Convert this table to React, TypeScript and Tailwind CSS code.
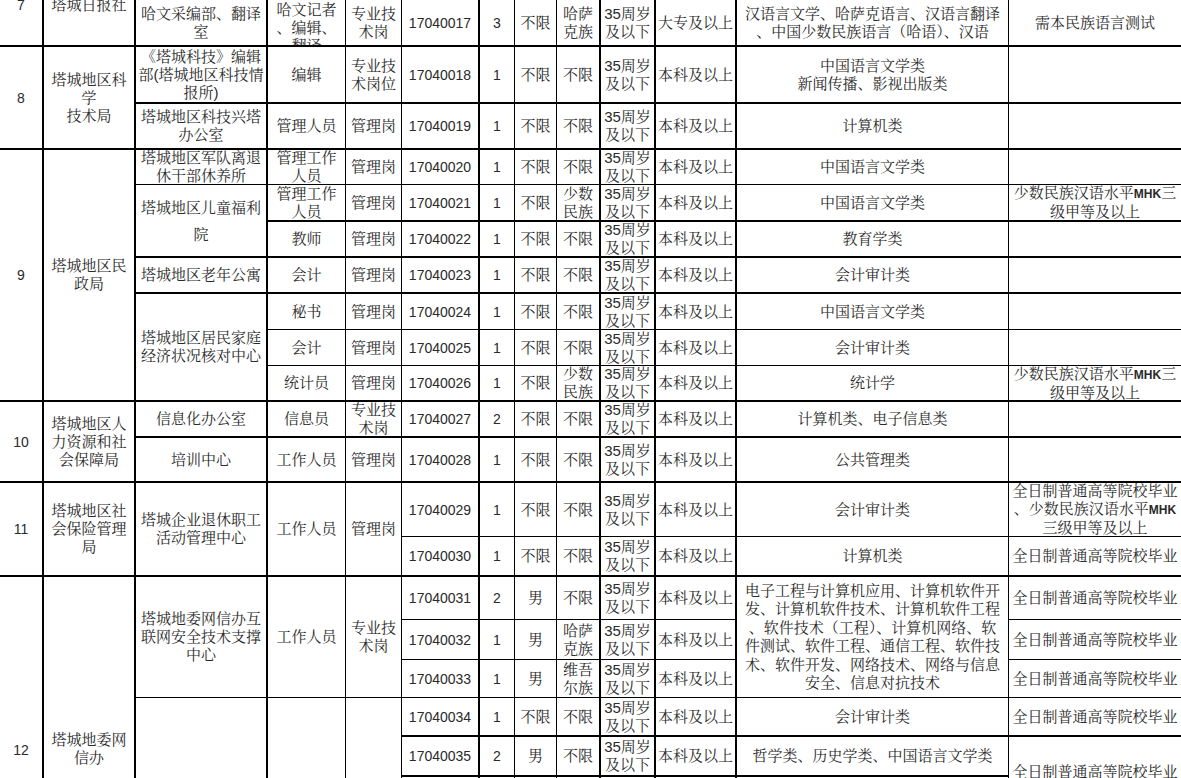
import { Fragment, type ReactNode } from "react";

type Content = string | string[];
type Cell = [Content, number?, string?];

const AGE = ["35周岁", "及以下"];
const BK = "本科及以上";
const QR = "全日制普通高等院校毕业";
const MHK = ["少数民族汉语水平MHK三", "级甲等及以上"];

const tail = (code: string, n: string, g: Content, e: Content, edu: string, major: Content, other: Content): Cell[] => [
  [code],
  [n],
  [g],
  [e],
  [AGE],
  [edu],
  [major],
  [other],
];

const rows: Cell[][] = [
  [["7", 2], ["塔城日报社", 2], [""], [""], [""], [""], [""], [""], [""], [""], [""], [""], [""]],
  [
    [["哈文采编部、翻译", "室"]],
    [["哈文记者", "、编辑、", "翻译"], 1, "items-start pt-px"],
    [["专业技", "术岗"]],
    ...tail("17040017", "3", "不限", ["哈萨", "克族"], "大专及以上", ["汉语言文学、哈萨克语言、汉语言翻译", "、中国少数民族语言（哈语）、汉语"], "需本民族语言测试"),
  ],
  [
    ["8", 2],
    [["塔城地区科", "学", "技术局"], 2],
    [["《塔城科技》编辑", "部(塔城地区科技情", "报所)"]],
    ["编辑"],
    [["专业技", "术岗位"]],
    ...tail("17040018", "1", "不限", "不限", BK, ["中国语言文学类", "新闻传播、影视出版类"], ""),
  ],
  [[["塔城地区科技兴塔", "办公室"]], ["管理人员"], ["管理岗"], ...tail("17040019", "1", "不限", "不限", BK, "计算机类", "")],
  [
    ["9", 7],
    [["塔城地区民", "政局"], 7],
    [["塔城地区军队离退", "休干部休养所"]],
    [["管理工作", "人员"]],
    ["管理岗"],
    ...tail("17040020", "1", "不限", "不限", BK, "中国语言文学类", ""),
  ],
  [
    [["塔城地区儿童福利", "院"], 2, "leading-[27px]"],
    [["管理工作", "人员"]],
    ["管理岗"],
    ...tail("17040021", "1", "不限", ["少数", "民族"], BK, "中国语言文学类", MHK),
  ],
  [["教师"], ["管理岗"], ...tail("17040022", "1", "不限", "不限", BK, "教育学类", "")],
  [["塔城地区老年公寓"], ["会计"], ["管理岗"], ...tail("17040023", "1", "不限", "不限", BK, "会计审计类", "")],
  [
    [["塔城地区居民家庭", "经济状况核对中心"], 3],
    ["秘书"],
    ["管理岗"],
    ...tail("17040024", "1", "不限", "不限", BK, "中国语言文学类", ""),
  ],
  [["会计"], ["管理岗"], ...tail("17040025", "1", "不限", "不限", BK, "会计审计类", "")],
  [["统计员"], ["管理岗"], ...tail("17040026", "1", "不限", ["少数", "民族"], BK, "统计学", MHK)],
  [
    ["10", 2],
    [["塔城地区人", "力资源和社", "会保障局"], 2],
    ["信息化办公室"],
    ["信息员"],
    [["专业技", "术岗"]],
    ...tail("17040027", "2", "不限", "不限", BK, "计算机类、电子信息类", ""),
  ],
  [["培训中心"], ["工作人员"], ["管理岗"], ...tail("17040028", "1", "不限", "不限", BK, "公共管理类", "")],
  [
    ["11", 2],
    [["塔城地区社", "会保险管理", "局"], 2],
    [["塔城企业退休职工", "活动管理中心"], 2],
    ["工作人员", 2],
    ["管理岗", 2],
    ...tail("17040029", "1", "不限", "不限", BK, "会计审计类", [QR, "、少数民族汉语水平MHK", "三级甲等及以上"]),
  ],
  tail("17040030", "1", "不限", "不限", BK, "计算机类", QR),
  [
    ["12", 6, "items-start pt-[164px]"],
    [["塔城地委网", "信办"], 6, "items-start pt-[154px]"],
    [["塔城地委网信办互", "联网安全技术支撑", "中心"], 3],
    ["工作人员", 3],
    [["专业技", "术岗"], 3],
    ["17040031"],
    ["2"],
    ["男"],
    ["不限"],
    [AGE],
    [BK],
    [
      [
        "电子工程与计算机应用、计算机软件开",
        "发、计算机软件技术、计算机软件工程",
        "、软件技术（工程）、计算机网络、软",
        "件测试、软件工程、通信工程、软件技",
        "术、软件开发、网络技术、网络与信息",
        "安全、信息对抗技术",
      ],
      3,
      "leading-[18.5px]",
    ],
    [QR],
  ],
  [["17040032"], ["1"], ["男"], [["哈萨", "克族"]], [AGE], [BK], [QR]],
  [["17040033"], ["1"], ["男"], [["维吾", "尔族"]], [AGE], [BK], [QR]],
  [["", 3], ["", 3], ["", 3], ...tail("17040034", "1", "不限", "不限", BK, "会计审计类", QR)],
  [
    ["17040035"],
    ["2"],
    ["男"],
    ["不限"],
    [AGE],
    [BK],
    ["哲学类、历史学类、中国语言文学类"],
    [QR, 2, "items-start pt-[26px]"],
  ],
  [[""], [""], [""], [""], [""], [""], [""]],
];

// line weights as they come out of the sheet scan
const rightThick = [2, 2, 2, 1, 1, 2, 1, 1, 2, 2, 2, 1, 0];
const bottomThick = [1, 2, 2, 2, 1, 2, 2, 2, 1, 1, 2, 2, 2, 1, 2, 1, 1, 1, 2, 2, 1];

const SPAN: Record<number, string> = {
  1: "",
  2: "row-span-2",
  3: "row-span-3",
  6: "row-span-6",
  7: "row-span-7",
};

function renderLine(line: string): ReactNode {
  if (!line.includes("MHK")) return line;
  const [a, b] = line.split("MHK");
  return (
    <>
      {a}
      <span className="text-[12px] font-bold">MHK</span>
      {b}
    </>
  );
}

function layout() {
  const busy = new Array(13).fill(-1);
  const out: { key: string; content: Content; rs: number; cls: string; c: number; end: number }[] = [];
  rows.forEach((row, r) => {
    let c = 0;
    row.forEach(([content, rs = 1, cls = ""], i) => {
      while (busy[c] >= r) c++;
      busy[c] = r + rs - 1;
      out.push({ key: `${r}-${i}`, content, rs, cls, c, end: r + rs - 1 });
      c++;
    });
  });
  return out;
}

const cells = layout();

export default function App() {
  return (
    <div className="h-[778px] w-[1181px] overflow-hidden bg-white font-['Liberation_Sans','Noto_Serif_CJK_SC','Noto_Sans_CJK_SC',sans-serif] text-[15px] leading-[18px] text-[#2a2a2a]">
      <div className="-mt-[35px] grid grid-cols-[44px_92px_132px_78px_56px_78px_35px_42px_44px_55px_81px_272px_172px] grid-rows-[35px_47px_57px_46px_35px_37px_36px_36px_36px_36px_36px_36px_45px_54px_40px_43px_40px_38px_39px_40px_40px]">
        {cells.map(({ key, content, rs, cls, c, end }) => {
          const lines = Array.isArray(content) ? content : [content];
          const digits = lines.length === 1 && /^\d+$/.test(lines[0]);
          const rb = rightThick[c] === 2 ? "border-r-2" : rightThick[c] === 1 ? "border-r" : "";
          const bb = bottomThick[end] === 2 ? "border-b-2" : "border-b";
          const align = cls.includes("items-start") ? "" : "items-center";
          return (
            <div
              key={key}
              className={`flex justify-center overflow-hidden whitespace-nowrap border-black text-center ${align} ${rb} ${bb} ${SPAN[rs]} ${cls}`}
            >
              <div className={digits ? "text-[14px]" : ""}>
                {lines.map((l, i) => (
                  <Fragment key={i}>
                    <div>{renderLine(l)}</div>
                  </Fragment>
                ))}
              </div>
            </div>
          );
        })}
      </div>
    </div>
  );
}
